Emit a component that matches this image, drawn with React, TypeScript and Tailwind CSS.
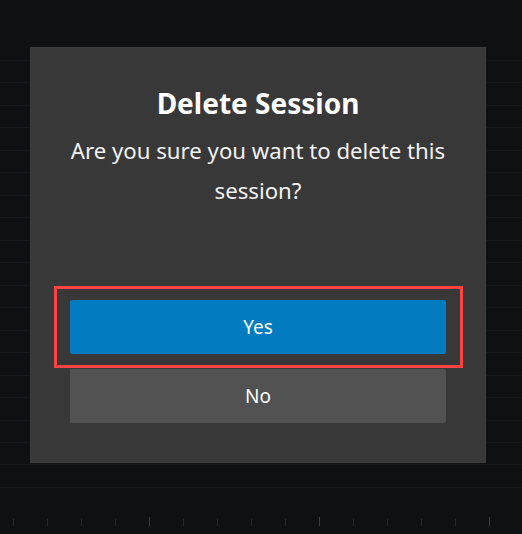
import React from 'react';

const ROWS = Array.from({ length: 20 });
const TICKS = Array.from({ length: 15 });

export default function App() {
  return (
    <div
      className="relative h-[534px] w-[522px] overflow-hidden bg-[#0e1114]"
      style={{ fontFamily: '"Noto Sans", "Open Sans", sans-serif' }}
    >
      {/* timeline behind the modal */}
      <div className="pt-[60px]">
        {ROWS.map((_, i) => (
          <div key={i} className="h-[22.47px] border-t border-[#15191d]" />
        ))}
      </div>
      <div className="mt-[7px] flex h-[10px] items-end gap-[33px] pl-[13px]">
        {TICKS.map((_, i) => (
          <div
            key={i}
            className={i % 5 === 4 ? 'h-[9px] w-px bg-[#3a3f44]' : 'h-[7px] w-px bg-[#23282c]'}
          />
        ))}
      </div>

      {/* modal */}
      <div className="absolute left-[30px] top-[47px] flex h-[416px] w-[456px] flex-col border border-[#3d3d3d] bg-[#383838] p-[39px]">
        <h2 className="text-center text-[28px] font-bold leading-[1.2] text-white">Delete Session</h2>
        <p className="-mx-2 mt-[10px] text-center text-[22.2px] leading-[40px] text-[#f2f2f2]">
          Are you sure you want to delete this session?
        </p>
        <div className="mt-auto flex flex-col gap-[15px]">
          <div className="relative">
            <button className="h-[54px] w-full rounded-[2px] bg-[#037bc0] text-[19px] text-white">Yes</button>
            <span className="pointer-events-none absolute -bottom-[14px] -left-4 -right-[17px] -top-[14px] border-3 border-[#ff4343]" />
          </div>
          <button className="h-[54px] w-full rounded-[2px] bg-[#525252] text-[19px] text-white">No</button>
        </div>
      </div>
    </div>
  );
}
